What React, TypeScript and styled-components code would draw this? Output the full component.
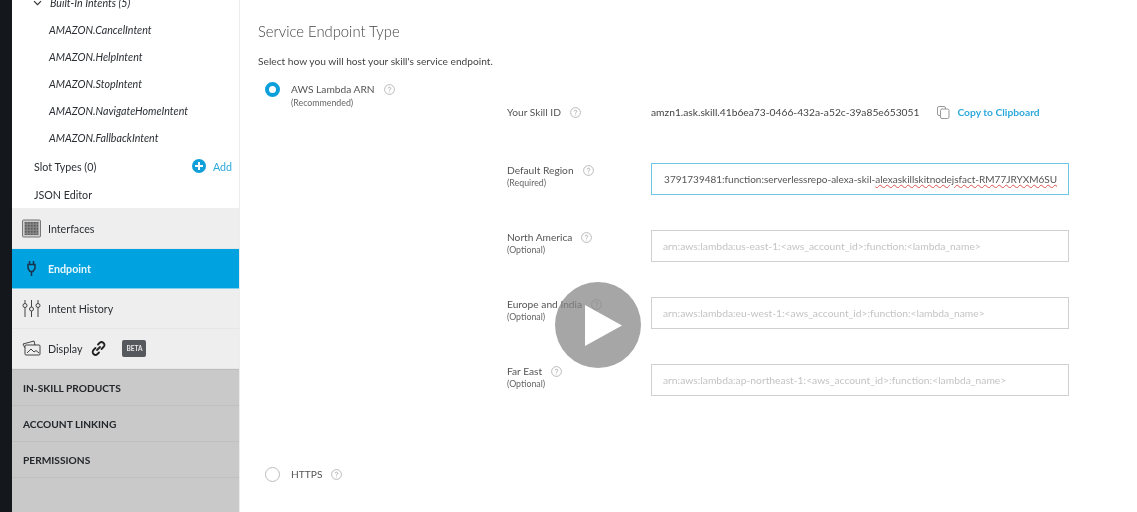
import styled, { createGlobalStyle } from "styled-components";

const GlobalStyle = createGlobalStyle`
  html, body {
    margin: 0;
    height: 100%;
    background: #fff;
    overflow: hidden;
  }
  * {
    box-sizing: border-box;
  }
`;

const Page = styled.div`
  position: relative;
  display: flex;
  width: 1137px;
  height: 512px;
  overflow: hidden;
  font-family: Lato, "Open Sans", sans-serif;
  color: #333;
  filter: blur(0.45px);
`;

const Strip = styled.div`
  width: 12px;
  background: #14181d;
`;

const Sidebar = styled.nav`
  display: flex;
  flex-direction: column;
  width: 228px;
  border-right: 1px solid #ececec;
`;

const IntentList = styled.div`
  display: flex;
  flex-direction: column;
  height: 219px;
  margin-top: -11px;
`;

const TreeRow = styled.div<{ $indent: number; $italic?: boolean }>`
  display: flex;
  align-items: center;
  height: 27px;
  flex-shrink: 0;
  padding-left: ${(p) => p.$indent}px;
  padding-right: 7px;
  font-size: 10.7px;
  font-style: ${(p) => (p.$italic ? "italic" : "normal")};
  color: #2a2e33;
`;

const SlotRow = styled(TreeRow)`
  height: 28px;
  margin-top: 1px;
`;

const EditorRow = styled(TreeRow)`
  height: 28px;
`;

const Chevron = styled.svg`
  width: 9px;
  height: 6px;
  margin-right: 8px;
  margin-left: -17px;
`;

const AddLink = styled.span`
  display: flex;
  align-items: center;
  gap: 7px;
  margin-left: auto;
  color: #2ea9dc;
  font-size: 10.7px;
`;

const NavItem = styled.div<{ $active?: boolean }>`
  display: flex;
  align-items: center;
  height: 40px;
  padding-left: 10px;
  gap: 7px;
  font-size: 10.7px;
  font-weight: ${(p) => (p.$active ? 700 : 400)};
  background: ${(p) => (p.$active ? "#00a3e0" : "#eeeeee")};
  color: ${(p) => (p.$active ? "#e4f6fd" : "#2a2e33")};
  border-bottom: 1px solid ${(p) => (p.$active ? "#7fd0ef" : "#e6e6e6")};
`;

const FirstNavItem = styled(NavItem)`
  height: 41px;
  padding-top: 1px;
`;

const NavIcon = styled.svg`
  width: 19px;
  height: 19px;
  flex-shrink: 0;
`;

const BetaTag = styled.span`
  display: flex;
  align-items: center;
  justify-content: center;
  width: 24px;
  height: 17px;
  margin-left: 8px;
  border-radius: 2px;
  background: #55585c;
  color: #e8e8e8;
  font-size: 6.5px;
  font-weight: 700;
`;

const SectionGroup = styled.div`
  flex: 1;
  background: #c8c9c8;
  border-top: 1px solid #bcbdbc;
`;

const SectionRow = styled.div`
  display: flex;
  align-items: center;
  height: 36px;
  padding-left: 11px;
  font-size: 10.2px;
  font-weight: 700;
  color: #23272c;
  border-bottom: 1px solid #bfc0bf;
`;

const Main = styled.main`
  flex: 1;
  padding: 21px 0 0 18px;
`;

const Heading = styled.h2`
  margin: 0;
  font-size: 14.8px;
  line-height: 20px;
  font-weight: 300;
  color: #444;
`;

const Lead = styled.p`
  margin: 12px 0 0;
  font-size: 10.2px;
  line-height: 16px;
  color: #444;
`;

const OptionRow = styled.div`
  display: flex;
  align-items: flex-start;
  margin-top: 12px;
`;

const Radio = styled.span<{ $checked?: boolean }>`
  width: 15px;
  height: 15px;
  margin: 1px 0 0 7px;
  flex-shrink: 0;
  border-radius: 50%;
  background: #fff;
  border: ${(p) => (p.$checked ? "4px solid #0d9fdc" : "1px solid #bbb")};
`;

const OptionText = styled.div`
  width: 216px;
  margin-left: 11px;
`;

const OptionLabel = styled.div`
  display: flex;
  align-items: center;
  gap: 9px;
  height: 16px;
  font-size: 10.2px;
  color: #555;
`;

const Hint = styled.div`
  font-size: 8.8px;
  line-height: 12px;
  color: #666;
`;

const Fields = styled.div`
  display: grid;
  grid-template-columns: 144px 418px;
  grid-auto-rows: 32px;
  row-gap: 35px;
  align-items: center;
  margin-top: 15px;
`;

const FieldLabel = styled.div`
  display: flex;
  align-items: center;
  gap: 9px;
  height: 14px;
  font-size: 10.2px;
  color: #555;
`;

const LabelBlock = styled.div`
  padding-bottom: 6px;
`;

const SkillRow = styled.div`
  display: flex;
  align-items: center;
  font-size: 10.25px;
  color: #444;
`;

const CopyLink = styled.span`
  display: flex;
  align-items: center;
  gap: 7px;
  margin-left: 18px;
  color: #2ea9dc;
  font-weight: 700;
`;

const TextField = styled.div<{ $focused?: boolean }>`
  display: flex;
  align-items: center;
  height: 32.5px;
  padding: 0 11px;
  white-space: nowrap;
  border: 1px solid ${(p) => (p.$focused ? "#6fc5e6" : "#cfd1d0")};
  color: ${(p) => (p.$focused ? "#555" : "#c4c4c4")};
  font-size: ${(p) => (p.$focused ? "10px" : "10.3px")};
`;

const ClippedValue = styled.div`
  display: flex;
  justify-content: flex-end;
  width: 100%;
  padding-bottom: 3px;
  margin-bottom: -3px;
  overflow: hidden;
`;

const Squiggle = styled.span`
  text-decoration: underline wavy #d9534f 1px;
  text-underline-offset: 1px;
`;

const HttpsRow = styled(OptionRow)`
  margin-top: 70px;
  align-items: center;
`;

const PlayOverlay = styled.div`
  position: absolute;
  left: 555px;
  top: 282px;
  display: flex;
  align-items: center;
  justify-content: center;
  width: 86px;
  height: 86px;
  border-radius: 50%;
  background: rgba(132, 132, 132, 0.72);
`;

const PlayIcon = styled.svg`
  width: 37px;
  height: 41px;
  margin-left: 10px;
`;

const HelpSvg = styled.svg`
  width: 11px;
  height: 11px;
  flex-shrink: 0;
`;

const Help = () => (
  <HelpSvg viewBox="0 0 11 11">
    <circle cx="5.5" cy="5.5" r="4.9" fill="none" stroke="#a9a9a9" strokeWidth="0.8" />
    <path d="M4.2 4.4a1.3 1.3 0 1 1 1.9 1.2c-.4.2-.6.4-.6.9" fill="none" stroke="#999" strokeWidth="0.7" />
    <circle cx="5.5" cy="8" r="0.45" fill="#999" />
  </HelpSvg>
);

const intents = [
  "AMAZON.CancelIntent",
  "AMAZON.HelpIntent",
  "AMAZON.StopIntent",
  "AMAZON.NavigateHomeIntent",
  "AMAZON.FallbackIntent",
];

const optionalFields = [
  { label: "North America", arn: "arn:aws:lambda:us-east-1:<aws_account_id>:function:<lambda_name>" },
  { label: "Europe and India", arn: "arn:aws:lambda:eu-west-1:<aws_account_id>:function:<lambda_name>" },
  { label: "Far East", arn: "arn:aws:lambda:ap-northeast-1:<aws_account_id>:function:<lambda_name>" },
];

const FieldGroup = ({ label, arn }: { label: string; arn: string }) => (
  <>
    <LabelBlock>
      <FieldLabel>
        {label}
        <Help />
      </FieldLabel>
      <Hint>(Optional)</Hint>
    </LabelBlock>
    <TextField>{arn}</TextField>
  </>
);

const App = () => {
  return (
    <Page>
      <GlobalStyle />
      <Strip />
      <Sidebar>
        <IntentList>
          <TreeRow $indent={38} $italic>
            <Chevron viewBox="0 0 9 6">
              <path d="M1 1.2l3.5 3.5L8 1.2" fill="none" stroke="#333" strokeWidth="1.2" />
            </Chevron>
            Built-In Intents (5)
          </TreeRow>
          {intents.map((name) => (
            <TreeRow key={name} $indent={37} $italic>
              {name}
            </TreeRow>
          ))}
          <SlotRow $indent={22}>
            Slot Types (0)
            <AddLink>
              <svg width="14" height="14" viewBox="0 0 14 14">
                <circle cx="7" cy="7" r="7" fill="#119fd9" />
                <path d="M7 3v8M3 7h8" stroke="#fff" strokeWidth="2" />
              </svg>
              Add
            </AddLink>
          </SlotRow>
          <EditorRow $indent={22}>JSON Editor</EditorRow>
        </IntentList>
        <FirstNavItem>
          <NavIcon viewBox="0 0 19 19">
            <defs>
              <pattern id="mesh" width="1.5" height="1.5" patternUnits="userSpaceOnUse">
                <rect width="1.5" height="1.5" fill="#8a8a8a" />
                <rect width="0.8" height="0.8" fill="#4a4a4a" />
              </pattern>
            </defs>
            <rect x="0.5" y="1" width="18" height="17" rx="1" fill="#cfcfcf" stroke="#777" />
            <rect x="2.5" y="3" width="14" height="13" fill="url(#mesh)" />
          </NavIcon>
          Interfaces
        </FirstNavItem>
        <NavItem $active>
          <NavIcon viewBox="0 0 19 19">
            <path
              d="M7.500 2v3.500M11.500 2v3.500M6 5.500h7v4l-2 3h-3l-2-3zM9.500 12.500v4.500"
              fill="none"
              stroke="#17324a"
              strokeWidth="1.500"
            />
          </NavIcon>
          Endpoint
        </NavItem>
        <NavItem>
          <NavIcon viewBox="0 0 19 19">
            <g fill="none" stroke="#444" strokeWidth="1">
              <path d="M3 1v3.500M3 8.500V18M9.500 1v7M9.500 12v6M16 1v3.500M16 8.500V18" />
              <circle cx="3" cy="6.500" r="2" />
              <circle cx="9.500" cy="10" r="2" />
              <circle cx="16" cy="6.500" r="2" />
            </g>
          </NavIcon>
          Intent History
        </NavItem>
        <NavItem>
          <NavIcon viewBox="0 0 19 19">
            <g fill="#eee" stroke="#444" strokeWidth="1">
              <path d="M1 5l11-3 1 4-10 3z" />
              <rect x="3" y="6" width="15" height="10" rx="1" />
            </g>
            <path d="M5 14l4-4 3 3 2-1.500 3 2.500" fill="none" stroke="#444" />
          </NavIcon>
          Display
          <svg width="17" height="17" viewBox="0 0 17 17" style={{ marginLeft: 1 }}>
            <g fill="none" stroke="#222" strokeWidth="1.800" strokeLinecap="round">
              <path d="M7 10l3-3" />
              <path d="M8 4.500l1.500-1.500a2.800 2.800 0 0 1 4 4l-2 2" />
              <path d="M9 12.500l-1.500 1.500a2.800 2.800 0 0 1-4-4l2-2" />
            </g>
          </svg>
          <BetaTag>BETA</BetaTag>
        </NavItem>
        <SectionGroup>
          <SectionRow>IN-SKILL PRODUCTS</SectionRow>
          <SectionRow>ACCOUNT LINKING</SectionRow>
          <SectionRow>PERMISSIONS</SectionRow>
        </SectionGroup>
      </Sidebar>
      <Main>
        <Heading>Service Endpoint Type</Heading>
        <Lead>Select how you will host your skill's service endpoint.</Lead>
        <OptionRow>
          <Radio $checked />
          <OptionText>
            <OptionLabel>
              AWS Lambda ARN
              <Help />
            </OptionLabel>
            <Hint>(Recommended)</Hint>
          </OptionText>
          <Fields>
            <FieldLabel>
              Your Skill ID
              <Help />
            </FieldLabel>
            <SkillRow>
              amzn1.ask.skill.41b6ea73-0466-432a-a52c-39a85e653051
              <CopyLink>
                <svg width="13" height="13" viewBox="0 0 13 13">
                  <g fill="#fff" stroke="#999" strokeWidth="1">
                    <rect x="0.500" y="0.500" width="8" height="9" rx="1.500" />
                    <rect x="3.500" y="3" width="8.500" height="9.500" rx="1.500" />
                  </g>
                </svg>
                Copy to Clipboard
              </CopyLink>
            </SkillRow>
            <LabelBlock>
              <FieldLabel>
                Default Region
                <Help />
              </FieldLabel>
              <Hint>(Required)</Hint>
            </LabelBlock>
            <TextField $focused>
              <ClippedValue>
                <span>
                  3791739481:function:serverlessrepo-alexa-skil-<Squiggle>alexaskillskitnodejsfact-RM77JRYXM6SU</Squiggle>
                </span>
              </ClippedValue>
            </TextField>
            {optionalFields.map((field) => (
              <FieldGroup key={field.label} label={field.label} arn={field.arn} />
            ))}
          </Fields>
        </OptionRow>
        <HttpsRow>
          <Radio />
          <OptionText>
            <OptionLabel>
              HTTPS
              <Help />
            </OptionLabel>
          </OptionText>
        </HttpsRow>
      </Main>
      <PlayOverlay>
        <PlayIcon viewBox="0 0 38 42">
          <path d="M0 0l38 21L0 42z" fill="#fff" />
        </PlayIcon>
      </PlayOverlay>
    </Page>
  );
};

export default App;
